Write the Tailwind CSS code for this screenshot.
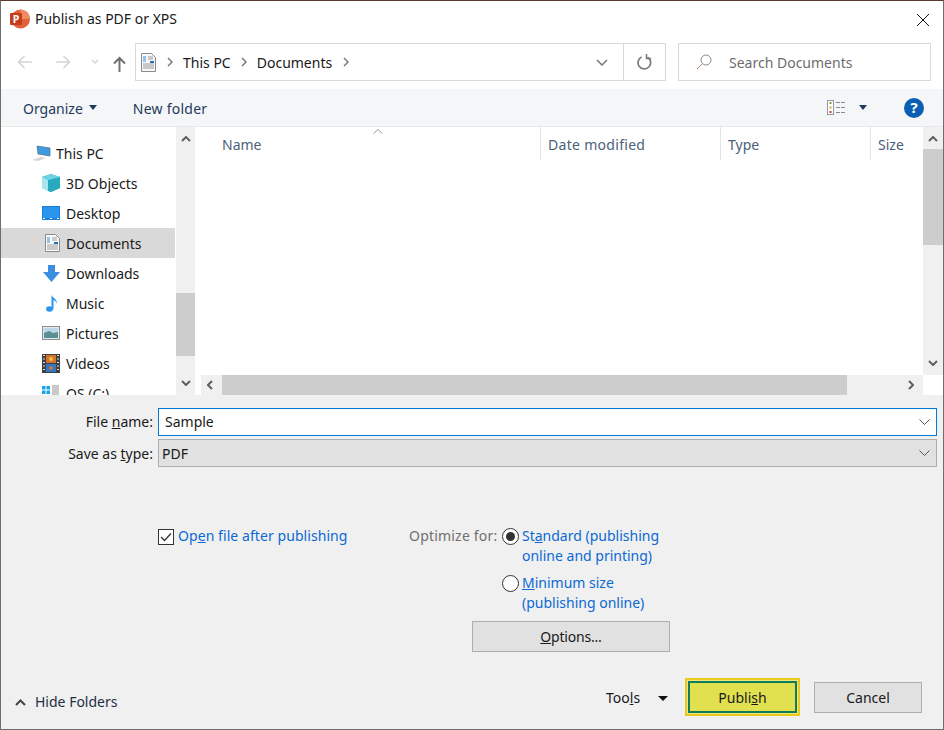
<!DOCTYPE html>
<html><head><meta charset="utf-8">
<script src="https://cdn.jsdelivr.net/npm/@tailwindcss/browser@4"></script>
</head>
<body class="m-0">
<div class="w-[944px] h-[730px] flex flex-col overflow-hidden bg-white border border-[#6e6e6e] border-t-[#5b3a30] font-['Noto_Sans',sans-serif] text-[14px] text-[#1a1a1a] leading-none">

  <!-- title -->
  <div class="h-[37px] shrink-0 flex items-center pl-[9px] pr-[13px]">
    <svg class="w-[20px] h-[20px] -mt-[1px] shrink-0" viewBox="0 0 20 20"><circle cx="10.500" cy="10" r="9.500" fill="#e2603a"/><path d="M10.500.500A9.500 9.500 0 0 1 20 10H10.500z" fill="#f08a63"/><rect x="0" y="4" width="12" height="12" rx="1" fill="#c43e1c"/><text x="2.800" y="13.800" font-size="10.500" font-weight="700" fill="#fff">P</text></svg>
    <span class="ml-[5px] text-[14px] -mt-[1px]">Publish as PDF or XPS</span>
    <svg class="ml-auto w-[14px] h-[14px]" viewBox="0 0 14 14" fill="none" stroke="#111" stroke-width="1"><path d="M1 1l12 12M13 1L1 13"/></svg>
  </div>

  <!-- nav -->
  <div class="h-[51px] shrink-0 flex items-start pl-[15px] pt-[5px]">
    <div class="h-[38px] w-[119px] shrink-0 flex items-center">
      <svg class="ml-[1px] w-[15px] h-[14px] shrink-0" viewBox="0 0 15 14" fill="none" stroke="#d3d3d3" stroke-width="1.500"><path d="M15 7H1.500M7.500 1L1.500 7l6 6"/></svg>
      <svg class="ml-[24px] w-[15px] h-[14px] shrink-0" viewBox="0 0 15 14" fill="none" stroke="#d3d3d3" stroke-width="1.500"><path d="M0 7h13.500M7.500 1l6 6-6 6"/></svg>
      <svg class="ml-[20px] w-[8px] h-[6px] shrink-0" viewBox="0 0 8 6" fill="none" stroke="#d3d3d3" stroke-width="1.500"><path d="M1 1l3 3 3-3"/></svg>
      <svg class="ml-[14px] mt-[3px] w-[13px] h-[16px] shrink-0" viewBox="0 0 13 16" fill="none" stroke="#707070" stroke-width="2"><path d="M6.500 16V2M1 7.500l5.500-5.500 5.500 5.500"/></svg>
    </div>
    <div class="h-[38px] w-[489px] shrink-0 flex items-center border border-[#d9d9d9]">
      <svg class="ml-[5px] w-[15px] h-[19px] shrink-0" viewBox="0 0 15 19"><path d="M.500.500h10l4 4v14H.500z" fill="#f8f8f8" stroke="#8a8a8a"/><path d="M2 4h3M2 6h3M2 8h3" stroke="#2a8fe0"/><path d="M7 4h5M7 6h5M2 11h11M2 13h11M2 15h11" stroke="#9a9a9a"/><rect x="9" y="8" width="4" height="2" fill="#2a6fb0"/></svg>
      <svg class="ml-[11px] w-[6px] h-[10px] shrink-0" viewBox="0 0 6 10" fill="none" stroke="#777" stroke-width="1.500"><path d="M1 1l4 4-4 4"/></svg>
      <span class="ml-[10px] mt-[2px]">This PC</span>
      <svg class="ml-[10px] w-[6px] h-[10px] shrink-0" viewBox="0 0 6 10" fill="none" stroke="#777" stroke-width="1.500"><path d="M1 1l4 4-4 4"/></svg>
      <span class="ml-[10px] mt-[2px]">Documents</span>
      <svg class="ml-[11px] w-[6px] h-[10px] shrink-0" viewBox="0 0 6 10" fill="none" stroke="#777" stroke-width="1.500"><path d="M1 1l4 4-4 4"/></svg>
      <svg class="ml-auto mr-[15px] w-[12px] h-[7px] shrink-0" viewBox="0 0 12 7" fill="none" stroke="#777" stroke-width="1.500"><path d="M1 1l5 5 5-5"/></svg>
    </div>
    <div class="h-[38px] w-[43px] shrink-0 -ml-[1px] flex items-center justify-center border border-[#d9d9d9]">
      <svg class="w-[15px] h-[16px]" viewBox="0 0 15 16" fill="none" stroke="#7a7a7a" stroke-width="1.700"><path d="M10.500 3.200A6.300 6.300 0 1 1 4.500 3"/><path d="M9.500 0v4.500H14" stroke-width="1.500"/></svg>
    </div>
    <div class="h-[38px] w-[253px] shrink-0 ml-[12px] flex items-center border border-[#d9d9d9] text-[#6d6d6d]">
      <svg class="ml-[17px] w-[16px] h-[16px] shrink-0" viewBox="0 0 16 16" fill="none" stroke="#8a8a8a"><circle cx="10" cy="6" r="5"/><path d="M6.500 9.500L1 15" stroke="#b58f73"/></svg>
      <span class="ml-[17px] mt-[2px]">Search Documents</span>
    </div>
  </div>

  <!-- toolbar -->
  <div class="h-[38px] shrink-0 flex items-center bg-[#f5f6f7] border-b border-[#e8e8e8] pl-[22px] pr-[19px] text-[#1f3a5c]">
    <span class="mt-[2px]">Organize</span>
    <svg class="ml-[6px] w-[8px] h-[5px]" viewBox="0 0 8 5"><path d="M0 0h8L4 5z" fill="#1f3a5c"/></svg>
    <span class="ml-[36px] mt-[2px] tracking-[0.25px]">New folder</span>
    <svg class="ml-auto w-[19px] h-[15px]" viewBox="0 0 19 15" fill="none"><rect x=".500" y=".500" width="6" height="14" fill="#fff" stroke="#999"/><rect x="2.500" y="2" width="2" height="2" fill="#7a9a3a"/><rect x="2.500" y="6.500" width="2" height="2" fill="#c7b42c"/><rect x="2.500" y="11" width="2" height="2" fill="#b5432c"/><path d="M9 2.500h10M9 7.500h10M9 12.500h10" stroke="#888" stroke-dasharray="4 1"/></svg>
    <svg class="ml-[13px] w-[8px] h-[5px]" viewBox="0 0 8 5"><path d="M0 0h8L4 5z" fill="#1f3a5c"/></svg>
    <span class="ml-[37px] w-[20px] h-[20px] rounded-full bg-[#0a5fb4] text-white font-bold text-[15px] flex items-center justify-center">?</span>
  </div>

  <!-- main -->
  <div class="h-[268px] shrink-0 flex">
    <!-- sidebar -->
    <div class="w-[175px] shrink-0 pt-[11px] pr-[1px] overflow-hidden">
      <div class="h-[30px] flex items-center pl-[31px]">
        <svg class="w-[20px] h-[16px] shrink-0" viewBox="0 0 20 16"><path d="M5 1l13 2v8L6 9z" fill="#3f9be0" stroke="#4a6a80" stroke-width=".700"/><path d="M0 15l9-3 5 1-8 3z" fill="#d5d5d5"/></svg>
        <span class="ml-[4px] mt-[2px]">This PC</span>
      </div>
      <div class="h-[30px] flex items-center pl-[41px]">
        <svg class="w-[18px] h-[18px] shrink-0" viewBox="0 0 18 18"><path d="M9 0l9 3v11l-9 4-9-4V3z" fill="#2cb3c4"/><path d="M0 3l6 3v11l-6-3z" fill="#a8e6ee"/><path d="M6 6l12-3v11l-9 4-3-1z" fill="#28a9bd"/><path d="M9 0l9 3-12 3-6-3z" fill="#6ed3e0"/></svg>
        <span class="ml-[6px] mt-[2px]">3D Objects</span>
      </div>
      <div class="h-[30px] flex items-center pl-[41px]">
        <svg class="w-[18px] h-[14px] shrink-0" viewBox="0 0 18 14"><rect width="18" height="14" fill="#1f7fd8"/><rect x="1" y="1" width="16" height="11" fill="#2a95ee"/><path d="M1 12.500h16" stroke="#e8f2fb" stroke-dasharray="2 5"/></svg>
        <span class="ml-[6px] mt-[2px]">Desktop</span>
      </div>
      <div class="h-[30px] flex items-center pl-[44px] bg-[#d9d9d9]">
        <svg class="w-[15px] h-[18px] shrink-0" viewBox="0 0 15 18"><path d="M.500.500h10l4 4v13H.500z" fill="#fafafa" stroke="#8a8a8a"/><path d="M2 4h3M2 6h3M2 8h3" stroke="#2a8fe0"/><path d="M7 4h5M7 6h5M2 11h11M2 13h11M2 15h11" stroke="#9a9a9a"/><rect x="9" y="8" width="4" height="2" fill="#2a6fb0"/></svg>
        <span class="ml-[6px] mt-[2px]">Documents</span>
      </div>
      <div class="h-[30px] flex items-center pl-[42px]">
        <svg class="w-[17px] h-[17px] shrink-0" viewBox="0 0 17 17"><path d="M5 0h7v7h5l-8.500 10L0 7h5z" fill="#3b8fdf"/></svg>
        <span class="ml-[6px] mt-[2px]">Downloads</span>
      </div>
      <div class="h-[30px] flex items-center pl-[45px]">
        <svg class="w-[12px] h-[17px] shrink-0" viewBox="0 0 12 17"><ellipse cx="3.500" cy="14" rx="3.500" ry="2.800" fill="#2a95ee"/><path d="M5.500 14V0c1 3 6 4 5.500 9-.5-2-2-3.500-3.500-4v9z" fill="#2a95ee"/></svg>
        <span class="ml-[8px] mt-[2px]">Music</span>
      </div>
      <div class="h-[30px] flex items-center pl-[41px]">
        <svg class="w-[18px] h-[14px] shrink-0" viewBox="0 0 18 14"><rect x=".500" y=".500" width="17" height="13" fill="#dfe9f2" stroke="#8f8f8f"/><rect x="2" y="2" width="14" height="5" fill="#bcd6ea"/><path d="M2 7l5-2 4 2 5-1v6H2z" fill="#5b8f92"/></svg>
        <span class="ml-[6px] mt-[2px]">Pictures</span>
      </div>
      <div class="h-[30px] flex items-center pl-[41px]">
        <svg class="w-[18px] h-[19px] shrink-0" viewBox="0 0 18 19"><rect width="18" height="19" fill="#3f3f3f"/><path d="M1 1.500h2M1 5h2M1 8.500h2M1 12h2M1 15.500h2M15 1.500h2M15 5h2M15 8.500h2M15 12h2M15 15.500h2" stroke="#ddd"/><rect x="4" y="1" width="10" height="8" fill="#d7722c"/><rect x="4" y="10" width="10" height="8" fill="#2f79c9"/><circle cx="9" cy="5" r="2" fill="#e8c33d"/><circle cx="9" cy="14" r="2" fill="#d7722c"/></svg>
        <span class="ml-[6px] mt-[2px]">Videos</span>
      </div>
      <div class="h-[30px] flex items-center pl-[41px]">
        <svg class="w-[18px] h-[18px] shrink-0" viewBox="0 0 18 18"><path d="M0 2h3.500v3.500H0zM4.500 2H8v3.500H4.500zM0 6.500h3.500V10H0zM4.500 6.500H8V10H4.500z" fill="#18a3e8"/><rect x="10" y="1" width="7" height="13" fill="#c9c9c9"/><rect x="8" y="13" width="10" height="5" fill="#a9a9a9"/></svg>
        <span class="ml-[6px] mt-[2px]">OS (C:)</span>
      </div>
    </div>
    <!-- sidebar scrollbar -->
    <div class="w-[19px] shrink-0 bg-[#f0f0f0] flex flex-col items-center">
      <svg class="mt-[9px] w-[10px] h-[6px]" viewBox="0 0 10 6" fill="none" stroke="#5f5f5f" stroke-width="2"><path d="M1 5l4-4 4 4"/></svg>
      <div class="mt-[151px] w-[19px] h-[63px] bg-[#cdcdcd]"></div>
      <svg class="mt-[24px] w-[10px] h-[6px]" viewBox="0 0 10 6" fill="none" stroke="#5f5f5f" stroke-width="2"><path d="M1 1l4 4 4-4"/></svg>
    </div>
    <!-- list -->
    <div class="flex-1 pl-[2px] flex flex-col min-w-0">
      <div class="h-[248px] flex">
        <div class="flex-1 relative">
          <div class="h-[33px] flex text-[#4c607a]">
            <div class="w-[344px] h-[33px] pl-[25px] pt-[2px] flex items-center border-r border-[#e5e5e5]">Name</div>
            <div class="w-[180px] h-[33px] pl-[7px] pt-[2px] flex items-center border-r border-[#e5e5e5] tracking-[0.3px]">Date modified</div>
            <div class="w-[150px] h-[33px] pl-[7px] pt-[2px] flex items-center border-r border-[#e5e5e5]">Type</div>
            <div class="pl-[7px] h-[33px] pt-[2px] flex items-center">Size</div>
          </div>
          <svg class="absolute left-[176px] top-[2px] w-[10px] h-[5px]" viewBox="0 0 10 5" fill="none" stroke="#9a9a9a"><path d="M.500 4.500L5 .500l4.500 4"/></svg>
        </div>
        <div class="w-[20px] shrink-0 bg-[#f0f0f0] flex flex-col items-center">
          <svg class="mt-[9px] w-[10px] h-[6px]" viewBox="0 0 10 6" fill="none" stroke="#5f5f5f" stroke-width="2"><path d="M1 5l4-4 4 4"/></svg>
          <div class="mt-[7px] w-[20px] h-[96px] bg-[#cdcdcd]"></div>
          <svg class="mt-[115px] w-[10px] h-[6px]" viewBox="0 0 10 6" fill="none" stroke="#5f5f5f" stroke-width="2"><path d="M1 1l4 4 4-4"/></svg>
        </div>
      </div>
      <div class="h-[20px] flex">
        <div class="ml-[4px] w-[722px] bg-[#f0f0f0] flex items-center">
          <svg class="ml-[6px] w-[6px] h-[10px] shrink-0" viewBox="0 0 6 10" fill="none" stroke="#5f5f5f" stroke-width="2"><path d="M5 1L1 5l4 4"/></svg>
          <div class="ml-[9px] w-[625px] h-[20px] shrink-0 bg-[#cdcdcd]"></div>
          <svg class="ml-[61px] w-[6px] h-[10px] shrink-0" viewBox="0 0 6 10" fill="none" stroke="#5f5f5f" stroke-width="2"><path d="M1 1l4 4-4 4"/></svg>
        </div>
      </div>
    </div>
  </div>

  <!-- bottom -->
  <div class="flex-1 bg-[#f0f0f0] flex flex-col min-h-0 pt-[13px]">
    <div class="h-[28px] flex items-center">
      <label class="w-[152px] text-right text-[#1a1a1a]">File <u>n</u>ame:</label>
      <div class="ml-[5px] w-[779px] h-[28px] bg-white border border-[#0078d7] flex items-center pl-[6px] pr-[6px]">
        <span>Sample</span>
        <svg class="ml-auto w-[11px] h-[6px]" viewBox="0 0 11 6" fill="none" stroke="#555"><path d="M.500.500l5 5 5-5"/></svg>
      </div>
    </div>
    <div class="mt-[3px] h-[28px] flex items-center">
      <label class="w-[152px] text-right mt-[2px]">Save as <u>t</u>ype:</label>
      <div class="ml-[5px] w-[779px] h-[28px] bg-[#e1e1e1] border border-[#adadad] flex items-center pl-[3px] pr-[6px]">
        <span class="mt-[2px]">PDF</span>
        <svg class="ml-auto w-[11px] h-[6px]" viewBox="0 0 11 6" fill="none" stroke="#555"><path d="M.500.500l5 5 5-5"/></svg>
      </div>
    </div>

    <div class="mt-[59px] flex items-start">
      <div class="ml-[157px] w-[16px] h-[16px] mt-[3px] shrink-0 border border-[#333] bg-white flex items-center justify-center">
        <svg class="w-[12px] h-[10px]" viewBox="0 0 12 10" fill="none" stroke="#333" stroke-width="1.300"><path d="M1 5l3.500 3.500L11 1.500"/></svg>
      </div>
      <span class="ml-[4px] w-[169px] h-[20px] shrink-0 flex items-center text-[#0a69d4] tracking-[0.07px] whitespace-nowrap"><span>Op<u>e</u>n file after publishing</span></span>
      <span class="ml-[62px] w-[88px] h-[20px] shrink-0 flex items-center text-[#6f6f6f] tracking-[0.2px] whitespace-nowrap">Optimize for:</span>
      <div class="ml-[5px] flex flex-col">
        <div class="flex items-start">
          <span class="w-[17px] h-[17px] mt-[2px] shrink-0 rounded-full border border-[#333] bg-white flex items-center justify-center"><span class="w-[9px] h-[9px] rounded-full bg-[#333]"></span></span>
          <div class="ml-[3px] text-[#0a69d4] leading-[20px]">St<u>a</u>ndard (publishing<br>online and printing)</div>
        </div>
        <div class="flex items-start mt-[7px]">
          <span class="w-[17px] h-[17px] mt-[2px] shrink-0 rounded-full border border-[#333] bg-white"></span>
          <div class="ml-[3px] text-[#0a69d4] leading-[20px]"><u>M</u>inimum size<br>(publishing online)</div>
        </div>
      </div>
    </div>

    <div class="mt-[8px] ml-[471px] w-[198px] h-[31px] bg-[#e1e1e1] border border-[#adadad] flex items-center justify-center"><span class="tracking-[-0.2px]"><u>O</u>ptions...</span></div>

    <div class="mt-[26px] flex items-center h-[38px]">
      <svg class="ml-[14px] mt-[10px] w-[11px] h-[7px] shrink-0" viewBox="0 0 11 7" fill="none" stroke="#444" stroke-width="2"><path d="M1 6l4.500-4.500L10 6"/></svg>
      <span class="ml-[9px] w-[85px] shrink-0 mt-[9px] text-[#1f2f44] whitespace-nowrap">Hide Folders</span>
      <span class="ml-[486px] w-[35px] shrink-0 mt-[2px] whitespace-nowrap">Too<u>l</u>s</span>
      <svg class="ml-[17px] w-[10px] h-[5px] mt-[2px] shrink-0" viewBox="0 0 10 5"><path d="M0 0h10L5 5z" fill="#111"/></svg>
      <div class="ml-[17px] w-[115px] h-[38px] shrink-0 bg-[#efe77c] border-2 border-[#ecc91a] p-[1px] flex">
        <div class="w-full h-full bg-[#e1e14f] border-2 border-[#0f7c5a] flex items-center justify-center"><span class="mt-[2px]">Publi<u>s</u>h</span></div>
      </div>
      <div class="ml-[14px] w-[108px] h-[31px] shrink-0 bg-[#e1e1e1] border border-[#adadad] flex items-center justify-center"><span class="mt-[2px]">Cancel</span></div>
    </div>
  </div>
</div>
</body></html>
